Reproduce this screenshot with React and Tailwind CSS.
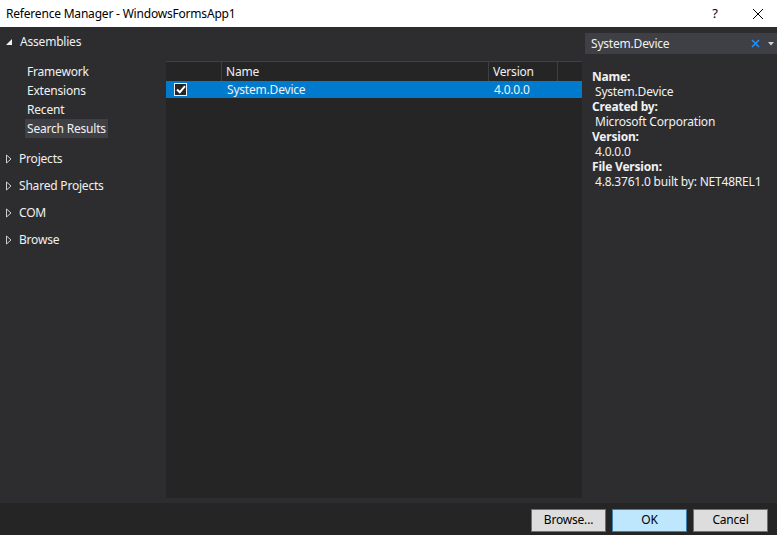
import React from 'react';

const font = { fontFamily: '"Segoe UI", "Noto Sans", "Open Sans", sans-serif' };

const Expander = ({ open }) =>
  open ? (
    <svg width="8" height="8" viewBox="0 0 8 8" className="shrink-0">
      <path d="M7 1 L7 7 L1 7 Z" fill="#f1f1f1" />
    </svg>
  ) : (
    <svg width="8" height="10" viewBox="0 0 8 10" className="shrink-0">
      <path d="M1.5 1 L6 5 L1.5 9 Z" fill="none" stroke="#d0d0d0" strokeWidth="1" />
    </svg>
  );

const TreeGroup = ({ label, className = '' }) => (
  <div className={`flex items-center gap-[6px] pl-[5px] h-[20px] ${className}`}>
    <Expander />
    <span>{label}</span>
  </div>
);

const App = () => {
  return (
    <div className="w-[777px] h-[535px] flex flex-col bg-[#2d2d30] text-[12px] tracking-[-0.2px] text-[#f1f1f1] overflow-hidden" style={font}>
      {/* title bar */}
      <div className="h-[27px] bg-white text-black flex items-center shrink-0">
        <span className="pl-[6px] flex-1 text-[12px]">Reference Manager - WindowsFormsApp1</span>
        <span className="w-[14px] text-center text-[13px] mr-[30px]">?</span>
        <svg width="12" height="12" viewBox="0 0 12 12" className="mr-[13px]">
          <path d="M1 1 L11 11 M11 1 L1 11" stroke="#000" strokeWidth="1" />
        </svg>
      </div>

      <div className="flex flex-1 min-h-0">
        {/* left tree */}
        <div className="w-[166px] shrink-0 pt-[5px]">
          <div className="flex items-center gap-[7px] pl-[5px] h-[20px]">
            <Expander open />
            <span>Assemblies</span>
          </div>
          <div className="mt-[10px] flex flex-col items-start whitespace-nowrap">
            <div className="h-[19px] pl-[27px] flex items-center">Framework</div>
            <div className="h-[19px] pl-[27px] flex items-center">Extensions</div>
            <div className="h-[19px] pl-[27px] flex items-center">Recent</div>
            <div className="h-[19px] ml-[25px] px-[2px] flex items-center bg-[#3f3f46]">Search Results</div>
          </div>
          <TreeGroup label="Projects" className="mt-[11px]" />
          <TreeGroup label="Shared Projects" className="mt-[7px]" />
          <TreeGroup label="COM" className="mt-[7px]" />
          <TreeGroup label="Browse" className="mt-[7px]" />
        </div>

        {/* list */}
        <div className="w-[416px] shrink-0 flex flex-col pt-[34px] pb-[5px]">
          <div className="flex-1 bg-[#252526] flex flex-col">
            <div className="h-[20px] flex border-t border-[#3f3f46]">
              <div className="w-[56px] border-r border-[#3f3f46]"></div>
              <div className="w-[267px] border-r border-[#3f3f46] pl-[4px] flex items-center">Name</div>
              <div className="w-[69px] border-r border-[#3f3f46] pl-[4px] flex items-center">Version</div>
            </div>
            <div className="h-[17px] flex items-center bg-[#007acc]">
              <div className="w-[56px] flex items-center pl-[8px]">
                <div className="w-[13px] h-[13px] border border-[#f1f1f1] bg-[#252526] flex items-center justify-center">
                  <svg width="10" height="9" viewBox="0 0 10 9">
                    <path d="M1 4.5 L3.8 7.2 L9 1.2" fill="none" stroke="#ffffff" strokeWidth="2" />
                  </svg>
                </div>
              </div>
              <div className="w-[267px] pl-[5px]">System.Device</div>
              <div className="pl-[5px]">4.0.0.0</div>
            </div>
          </div>
        </div>

        {/* right details */}
        <div className="flex-1 pt-[6px] pl-[3px]">
          <div className="h-[21px] bg-[#3f3f46] flex items-center pl-[6px] pr-[3px]">
            <span className="flex-1">System.Device</span>
            <svg width="9" height="9" viewBox="0 0 9 9" className="mr-[8px]">
              <path d="M1 1 L8 8 M8 1 L1 8" stroke="#1e90ff" strokeWidth="1.6" />
            </svg>
            <svg width="6" height="4" viewBox="0 0 6 4">
              <path d="M0 0 L6 0 L3 3.5 Z" fill="#d0d0d0" />
            </svg>
          </div>
          <div className="pl-[7px] pt-[15px] leading-[15px] whitespace-nowrap">
            <div className="font-bold">Name:</div>
            <div className="pl-[3px]">System.Device</div>
            <div className="font-bold">Created by:</div>
            <div className="pl-[3px]">Microsoft Corporation</div>
            <div className="font-bold">Version:</div>
            <div className="pl-[3px]">4.0.0.0</div>
            <div className="font-bold">File Version:</div>
            <div className="pl-[3px]">4.8.3761.0 built by: NET48REL1</div>
          </div>
        </div>
      </div>

      {/* footer */}
      <div className="h-[32px] bg-[#252526] shrink-0 flex items-center justify-end gap-[6px] pr-[9px] pt-[2px] text-black">
        <button className="w-[75px] h-[23px] bg-[#dddddd] border border-[#707070]">Browse...</button>
        <button className="w-[75px] h-[23px] bg-[#bee6fd] border border-[#3c7fb1]">OK</button>
        <button className="w-[75px] h-[23px] bg-[#dddddd] border border-[#707070]">Cancel</button>
      </div>
    </div>
  );
};

export default App;
